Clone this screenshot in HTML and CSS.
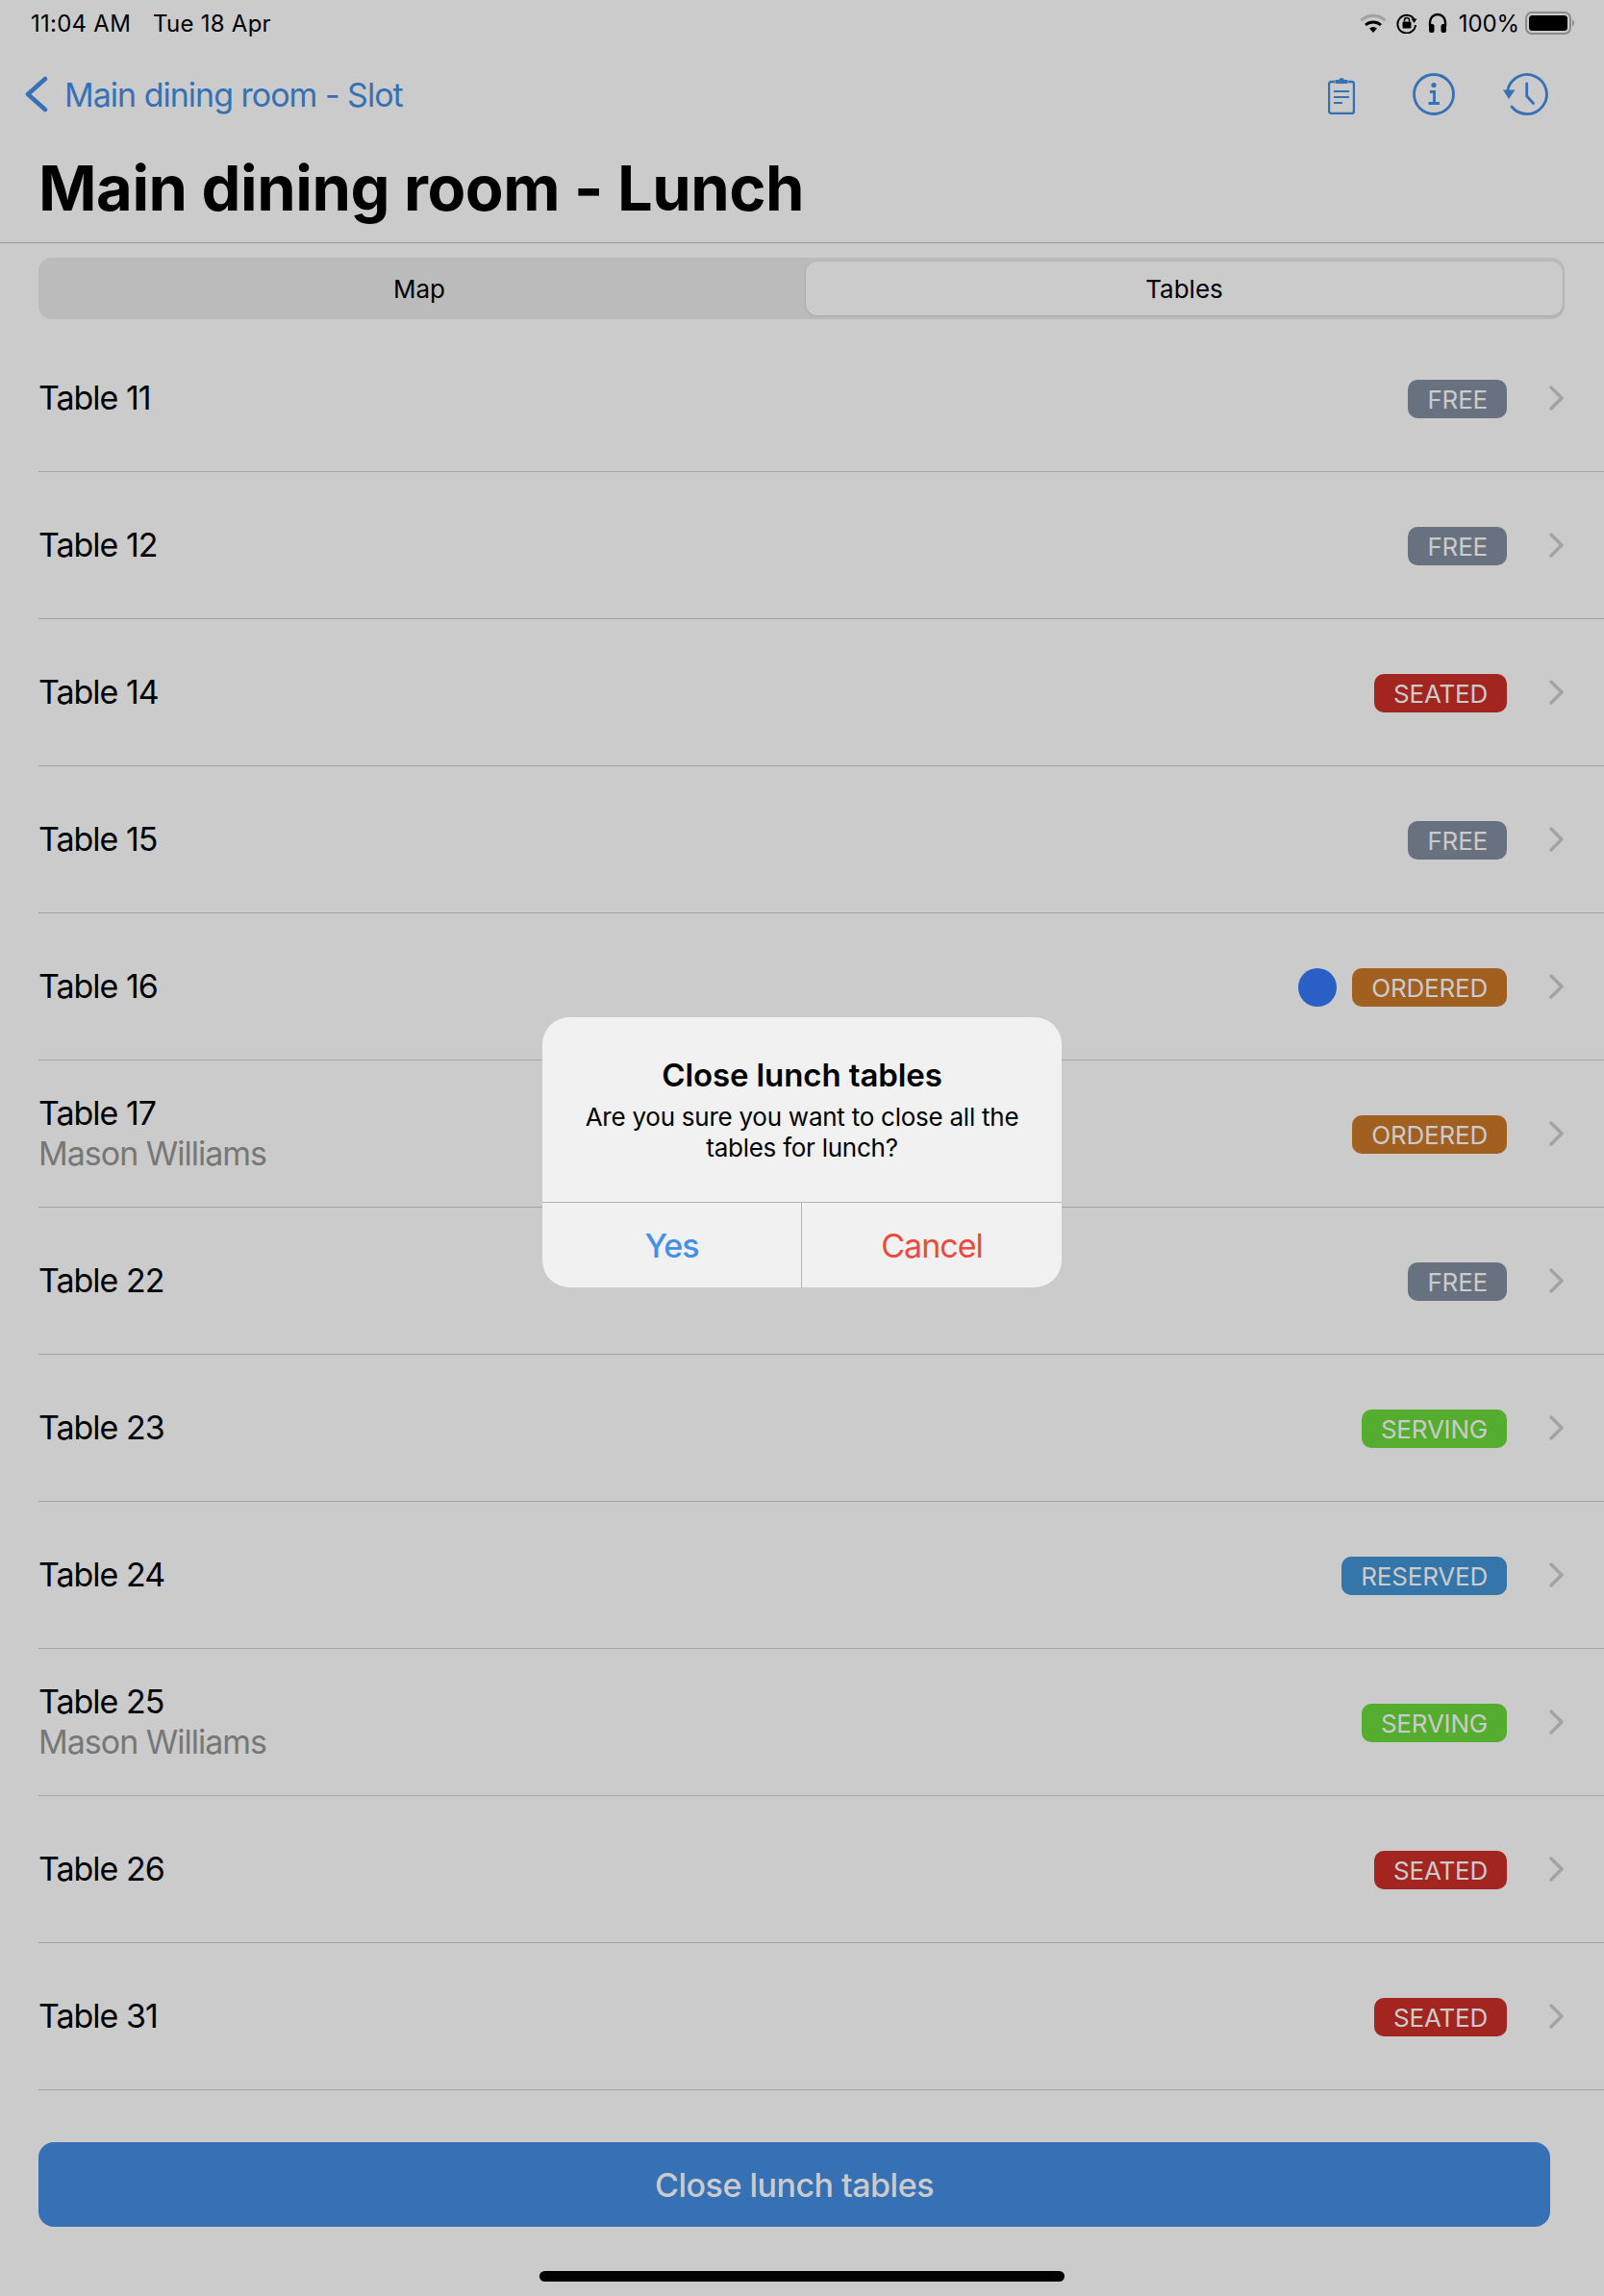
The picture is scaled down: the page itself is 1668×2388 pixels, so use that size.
FILE: index.html
```html
<!DOCTYPE html>
<html lang="en">
<head>
<meta charset="utf-8">
<title>Main dining room - Lunch</title>
<link rel="stylesheet" href="styles.css">
</head>
<body>
<div class="app">
  <div class="status">
    <div class="status-left"><span>11:04 AM</span><span>Tue 18 Apr</span></div>
    <div class="status-right">
      <svg class="st-wifi" width="28" height="20" viewBox="0 0 28 20"><path d="M1.5 7.5a18 18 0 0 1 25 0" fill="none" stroke="#a3a3a3" stroke-width="3.2"/><path d="M6 12a12 12 0 0 1 16 0" fill="none" stroke="#000" stroke-width="3"/><path d="M10 15.500a6 6 0 0 1 8 0L14 20z" fill="#000"/></svg>
      <svg class="st-lock" width="22" height="22" viewBox="0 0 22 22"><path d="M18.500 7A9.300 9.300 0 1 0 20 13" fill="none" stroke="#000" stroke-width="2"/><path d="M15.500 6.500h6l-3 4.500z" fill="#000"/><rect x="6.500" y="9.500" width="9" height="7" rx="1" fill="#000"/><path d="M8.500 9.500V8a2.500 2.500 0 0 1 5 0v1.500" fill="none" stroke="#000" stroke-width="1.500"/></svg>
      <svg class="st-phones" width="20" height="22" viewBox="0 0 20 22"><path d="M2 14V10a8 8 0 0 1 16 0v4" fill="none" stroke="#000" stroke-width="2.400"/><rect x="1" y="12" width="5.500" height="9" rx="2" fill="#000"/><rect x="13.500" y="12" width="5.500" height="9" rx="2" fill="#000"/></svg>
      <span class="st-pct">100%</span>
      <svg class="st-batt" width="52" height="24" viewBox="0 0 52 24"><rect x="1" y="1" width="46" height="22" rx="6" fill="none" stroke="#8a8a8a" stroke-width="2"/><rect x="4" y="4" width="40" height="16" rx="3.500" fill="#000"/><path d="M49 8.500a4 4 0 0 1 0 7z" fill="#8a8a8a"/></svg>
    </div>
  </div>

  <div class="nav">
    <div class="back">
      <svg width="26" height="38" viewBox="0 0 26 38"><path d="M22 3 4 19l18 16" fill="none" stroke="#3671b5" stroke-width="4.500" stroke-linecap="round" stroke-linejoin="round"/></svg>
      <span>Main dining room - Slot</span>
    </div>
    <div class="nav-actions">
      <svg class="nav-clip" width="28" height="41" viewBox="0 0 28 41"><path d="M7 7H3.500A2.500 2.500 0 0 0 1 9.500v28A2.500 2.500 0 0 0 3.500 40h21a2.500 2.500 0 0 0 2.500-2.500v-28A2.500 2.500 0 0 0 24.500 7H21" fill="none" stroke="#3671b5" stroke-width="2.400"/><path d="M7.500 9V5h3.800a2.800 2.800 0 0 1 5.400 0h3.800v4z" fill="#3671b5"/><path d="M6 17h16M6 23h16M6 29h9" stroke="#3671b5" stroke-width="2.200" fill="none"/></svg>
      <svg width="44" height="44" viewBox="0 0 44 44"><circle cx="22" cy="22" r="20.500" fill="none" stroke="#3671b5" stroke-width="2.800"/><circle cx="22" cy="12.500" r="2.600" fill="#3671b5"/><path d="M18 19.500h4.500V31M16.500 31.500h11.500" fill="none" stroke="#3671b5" stroke-width="2.800"/></svg>
      <svg width="48" height="44" viewBox="0 0 48 44"><path d="M4.800 18A20.500 20.500 0 1 1 9 35" fill="none" stroke="#3671b5" stroke-width="2.800" stroke-linecap="round"/><path d="M0 17.500h12.500L6 27z" fill="#3671b5"/><path d="M24.700 11v13l6.800 7.500" fill="none" stroke="#3671b5" stroke-width="2.800" stroke-linecap="round" stroke-linejoin="round"/></svg>
    </div>
  </div>

  <h1 class="title">Main dining room - Lunch</h1>

  <div class="segment">
    <div class="seg-item seg-map">Map</div>
    <div class="seg-item seg-active">Tables</div>
  </div>

  <div class="list">
    <div class="row"><div class="row-text"><div>Table 11</div></div><span class="badge free">FREE</span><svg class="chev" width="16" height="26" viewBox="0 0 16 26"><path d="M2 2l11 11L2 24" fill="none" stroke="#a3a3a3" stroke-width="3.500" stroke-linecap="round" stroke-linejoin="round"/></svg></div>
    <div class="row"><div class="row-text"><div>Table 12</div></div><span class="badge free">FREE</span><svg class="chev" width="16" height="26" viewBox="0 0 16 26"><path d="M2 2l11 11L2 24" fill="none" stroke="#a3a3a3" stroke-width="3.500" stroke-linecap="round" stroke-linejoin="round"/></svg></div>
    <div class="row"><div class="row-text"><div>Table 14</div></div><span class="badge seated">SEATED</span><svg class="chev" width="16" height="26" viewBox="0 0 16 26"><path d="M2 2l11 11L2 24" fill="none" stroke="#a3a3a3" stroke-width="3.500" stroke-linecap="round" stroke-linejoin="round"/></svg></div>
    <div class="row"><div class="row-text"><div>Table 15</div></div><span class="badge free">FREE</span><svg class="chev" width="16" height="26" viewBox="0 0 16 26"><path d="M2 2l11 11L2 24" fill="none" stroke="#a3a3a3" stroke-width="3.500" stroke-linecap="round" stroke-linejoin="round"/></svg></div>
    <div class="row"><div class="row-text"><div>Table 16</div></div><span class="dot"></span><span class="badge ordered">ORDERED</span><svg class="chev" width="16" height="26" viewBox="0 0 16 26"><path d="M2 2l11 11L2 24" fill="none" stroke="#a3a3a3" stroke-width="3.500" stroke-linecap="round" stroke-linejoin="round"/></svg></div>
    <div class="row"><div class="row-text"><div>Table 17</div><div class="sub">Mason Williams</div></div><span class="badge ordered">ORDERED</span><svg class="chev" width="16" height="26" viewBox="0 0 16 26"><path d="M2 2l11 11L2 24" fill="none" stroke="#a3a3a3" stroke-width="3.500" stroke-linecap="round" stroke-linejoin="round"/></svg></div>
    <div class="row"><div class="row-text"><div>Table 22</div></div><span class="badge free">FREE</span><svg class="chev" width="16" height="26" viewBox="0 0 16 26"><path d="M2 2l11 11L2 24" fill="none" stroke="#a3a3a3" stroke-width="3.500" stroke-linecap="round" stroke-linejoin="round"/></svg></div>
    <div class="row"><div class="row-text"><div>Table 23</div></div><span class="badge serving">SERVING</span><svg class="chev" width="16" height="26" viewBox="0 0 16 26"><path d="M2 2l11 11L2 24" fill="none" stroke="#a3a3a3" stroke-width="3.500" stroke-linecap="round" stroke-linejoin="round"/></svg></div>
    <div class="row"><div class="row-text"><div>Table 24</div></div><span class="badge reserved">RESERVED</span><svg class="chev" width="16" height="26" viewBox="0 0 16 26"><path d="M2 2l11 11L2 24" fill="none" stroke="#a3a3a3" stroke-width="3.500" stroke-linecap="round" stroke-linejoin="round"/></svg></div>
    <div class="row"><div class="row-text"><div>Table 25</div><div class="sub">Mason Williams</div></div><span class="badge serving">SERVING</span><svg class="chev" width="16" height="26" viewBox="0 0 16 26"><path d="M2 2l11 11L2 24" fill="none" stroke="#a3a3a3" stroke-width="3.500" stroke-linecap="round" stroke-linejoin="round"/></svg></div>
    <div class="row"><div class="row-text"><div>Table 26</div></div><span class="badge seated">SEATED</span><svg class="chev" width="16" height="26" viewBox="0 0 16 26"><path d="M2 2l11 11L2 24" fill="none" stroke="#a3a3a3" stroke-width="3.500" stroke-linecap="round" stroke-linejoin="round"/></svg></div>
    <div class="row"><div class="row-text"><div>Table 31</div></div><span class="badge seated">SEATED</span><svg class="chev" width="16" height="26" viewBox="0 0 16 26"><path d="M2 2l11 11L2 24" fill="none" stroke="#a3a3a3" stroke-width="3.500" stroke-linecap="round" stroke-linejoin="round"/></svg></div>
  </div>

  <div class="footer">
    <div class="close-btn">Close lunch tables</div>
    <div class="home-bar"></div>
  </div>
</div>

<div class="dialog">
  <div class="dialog-body">
    <div class="dialog-title">Close lunch tables</div>
    <div class="dialog-msg">Are you sure you want to close all the tables for lunch?</div>
  </div>
  <div class="dialog-actions">
    <div class="dialog-btn yes">Yes</div>
    <div class="dialog-btn cancel">Cancel</div>
  </div>
</div>
</body>
</html>
```
FILE: styles.css
```css
* { box-sizing: border-box; }
html, body { margin: 0; padding: 0; }
body {
  width: 1668px;
  height: 2388px;
  overflow: hidden;
  position: relative;
  background: #cbcbcb;
  font-family: Inter, "Liberation Sans", sans-serif;
  color: #000;
}
.app { display: flex; flex-direction: column; height: 2388px; }

.status {
  height: 48px;
  padding: 0 30px 0 32px;
  display: flex;
  align-items: center;
  justify-content: space-between;
  font-size: 24px;
}
.status-left { display: flex; gap: 23px; letter-spacing: 0.25px; }
.status-right { display: flex; align-items: center; }
.st-wifi { margin-right: 10px; }
.st-lock { margin-right: 11px; }
.st-pct { margin: 0 6px 0 12px; letter-spacing: -0.1px; }

.nav {
  height: 100px;
  padding: 0 57px 0 25px;
  display: flex;
  align-items: center;
  justify-content: space-between;
  color: #3671b5;
  font-size: 34px;
  letter-spacing: -1px;
}
.back { display: flex; align-items: center; gap: 16px; }
.nav-actions { display: flex; align-items: center; gap: 50px; }
.nav-clip { margin-right: 10px; }
.title {
  margin: 0;
  height: 105px;
  padding: 9px 40px 0;
  font-size: 65px;
  line-height: 78px;
  font-weight: 700;
  letter-spacing: -0.45px;
  border-bottom: 1px solid #9a9a9a;
}

.segment {
  margin: 15px 41px 0 40px;
  height: 64px;
  padding: 4px 2px 4px 0;
  display: grid;
  grid-template-columns: 798px 1fr;
  background: #bbbbbb;
  border-radius: 14px;
  font-size: 26px;
}
.seg-item { display: flex; align-items: center; justify-content: center; }
.seg-map { padding-right: 6px; }
.seg-active {
  background: #cbcbcb;
  border-radius: 12px;
  box-shadow: 0 1px 3px rgba(0, 0, 0, 0.12);
}

.list { margin-top: 6px; }
.row {
  height: 153px;
  margin-left: 40px;
  padding-right: 41px;
  display: flex;
  align-items: center;
  border-bottom: 1px solid #a3a3a3;
  font-size: 34px;
  letter-spacing: -1px;
}
.row-text { flex: 1; line-height: 42px; }
.sub { color: #777; }
.badge {
  height: 40px;
  margin-top: 2px;
  padding: 0 20px;
  display: flex;
  align-items: center;
  border-radius: 10px;
  font-size: 26px;
  letter-spacing: -0.2px;
  color: #cbcbcb;
}
.free { background: #68717f; }
.seated { background: #a32520; }
.ordered { background: #a15f20; }
.serving { background: #55ad2f; }
.reserved { background: #3476aa; }
.dot {
  width: 40px;
  height: 40px;
  margin: 2px 16px 0 0;
  border-radius: 50%;
  background: #2a60c6;
}
.chev { margin-left: 44px; }

.footer {
  flex: 1;
  padding: 54px 56px 0 40px;
  display: flex;
  flex-direction: column;
  align-items: center;
}
.close-btn {
  width: 100%;
  height: 88px;
  display: flex;
  align-items: center;
  justify-content: center;
  border-radius: 16px;
  background: #3671b5;
  color: #cbcbcb;
  font-size: 34px;
  font-weight: 500;
  letter-spacing: -0.5px;
}
.home-bar {
  width: 546px;
  height: 11px;
  margin: 46px 0 0 16px;
  border-radius: 6px;
  background: #000;
}

.dialog {
  position: absolute;
  left: 564px;
  top: 1058px;
  width: 540px;
  height: 281px;
  display: flex;
  flex-direction: column;
  background: #f1f1f1;
  border-radius: 28px;
}
.dialog-body {
  height: 193px;
  padding: 38px 30px 0;
  text-align: center;
  border-bottom: 1px solid #b4b4b4;
}
.dialog-title { font-size: 33px; font-weight: 600; line-height: 44px; letter-spacing: -0.1px; }
.dialog-msg { font-size: 26px; line-height: 32px; margin-top: 6px; letter-spacing: -0.25px; }
.dialog-actions { flex: 1; display: grid; grid-template-columns: 270px 1fr; }
.dialog-btn { display: flex; align-items: center; justify-content: center; font-size: 34px; letter-spacing: -1px; }
.yes { color: #4490e6; font-weight: 500; border-right: 1px solid #b4b4b4; }
.cancel { color: #ea4b3e; }
```
